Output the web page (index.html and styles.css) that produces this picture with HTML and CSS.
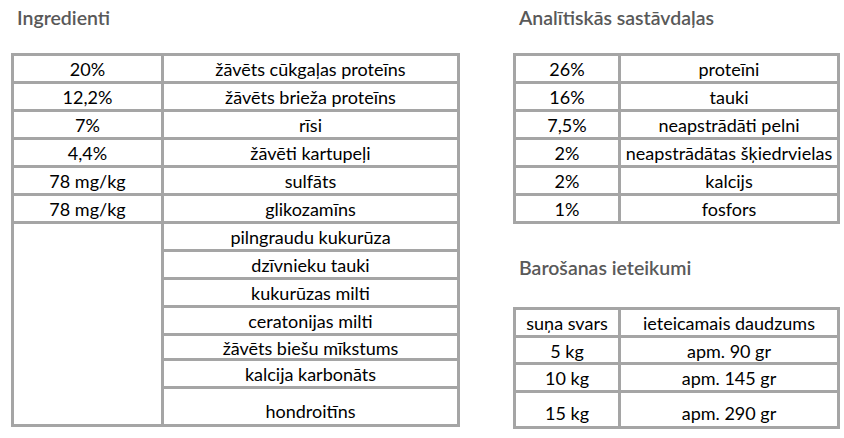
FILE: index.html
```html
<!DOCTYPE html>
<html lang="lv">
<head>
<meta charset="utf-8">
<title>Sastāvs</title>
<link rel="stylesheet" href="styles.css">
</head>
<body>
<div class="page">
  <section class="col col-left">
    <h2 class="heading">Ingredienti</h2>
    <table class="grid grid-ing">
      <colgroup><col class="c-ing1"><col class="c-ing2"></colgroup>
      <tr class="r28"><td>20%</td><td>žāvēts cūkgaļas proteīns</td></tr>
      <tr class="r28"><td>12,2%</td><td>žāvēts brieža proteīns</td></tr>
      <tr class="r28"><td>7%</td><td>rīsi</td></tr>
      <tr class="r28"><td>4,4%</td><td>žāvēti kartupeļi</td></tr>
      <tr class="r28"><td>78 mg/kg</td><td>sulfāts</td></tr>
      <tr class="r28"><td>78 mg/kg</td><td>glikozamīns</td></tr>
      <tr class="r28"><td rowspan="7"></td><td>pilngraudu kukurūza</td></tr>
      <tr class="r28"><td>dzīvnieku tauki</td></tr>
      <tr class="r28"><td>kukurūzas milti</td></tr>
      <tr class="r28"><td>ceratonijas milti</td></tr>
      <tr class="r25"><td>žāvēts biešu mīkstums</td></tr>
      <tr class="r28"><td>kalcija karbonāts</td></tr>
      <tr class="r38"><td class="bottom">hondroitīns</td></tr>
    </table>
  </section>
  <section class="col col-right">
    <h2 class="heading">Analītiskās sastāvdaļas</h2>
    <table class="grid grid-an">
      <colgroup><col class="c-an1"><col class="c-an2"></colgroup>
      <tr class="r28"><td>26%</td><td>proteīni</td></tr>
      <tr class="r28"><td>16%</td><td>tauki</td></tr>
      <tr class="r28"><td>7,5%</td><td>neapstrādāti pelni</td></tr>
      <tr class="r28"><td>2%</td><td>neapstrādātas šķiedrvielas</td></tr>
      <tr class="r28"><td>2%</td><td>kalcijs</td></tr>
      <tr class="r28"><td>1%</td><td>fosfors</td></tr>
    </table>
    <h2 class="heading heading-2">Barošanas ieteikumi</h2>
    <table class="grid grid-an">
      <colgroup><col class="c-an1"><col class="c-an2"></colgroup>
      <tr class="r28"><td>suņa svars</td><td>ieteicamais daudzums</td></tr>
      <tr class="r27"><td>5 kg</td><td>apm. 90 gr</td></tr>
      <tr class="r28"><td>10 kg</td><td>apm. 145 gr</td></tr>
      <tr class="r36"><td class="bottom">15 kg</td><td class="bottom">apm. 290 gr</td></tr>
    </table>
  </section>
</div>
</body>
</html>
```

FILE: styles.css
```css
html, body {
  margin: 0;
  padding: 0;
  background: #ffffff;
}
body {
  font-family: Lato, "Open Sans", "Liberation Sans", sans-serif;
  color: #000000;
}
.page {
  display: flex;
  align-items: flex-start;
  gap: 56px;
  padding: 0 0 0 11px;
}
.col-left { width: 446px; }
.col-right { width: 324px; }
.heading {
  margin: 6px 0 23px 6px;
  font-size: 19.5px;
  line-height: 24px;
  font-weight: 600;
  color: #595959;
}
.heading-2 {
  margin-top: 32px;
  margin-bottom: 27px;
}
.grid {
  border-collapse: collapse;
  table-layout: fixed;
  width: 100%;
  font-size: 18px;
  line-height: 20px;
}
.grid td {
  border: 3px solid #a5a5a5;
  padding: 1px 0 0;
  text-align: center;
  vertical-align: middle;
  white-space: nowrap;
  overflow: hidden;
}
.grid td.bottom {
  vertical-align: bottom;
  padding-bottom: 3px;
}
.c-ing1 { width: 150px; }
.c-ing2 { width: 296px; }
.c-an1 { width: 105px; }
.c-an2 { width: 219px; }
.r25 { height: 25px; }
.r27 { height: 27px; }
.r28 { height: 28px; }
.r36 { height: 36px; }
.r38 { height: 38px; }
```
